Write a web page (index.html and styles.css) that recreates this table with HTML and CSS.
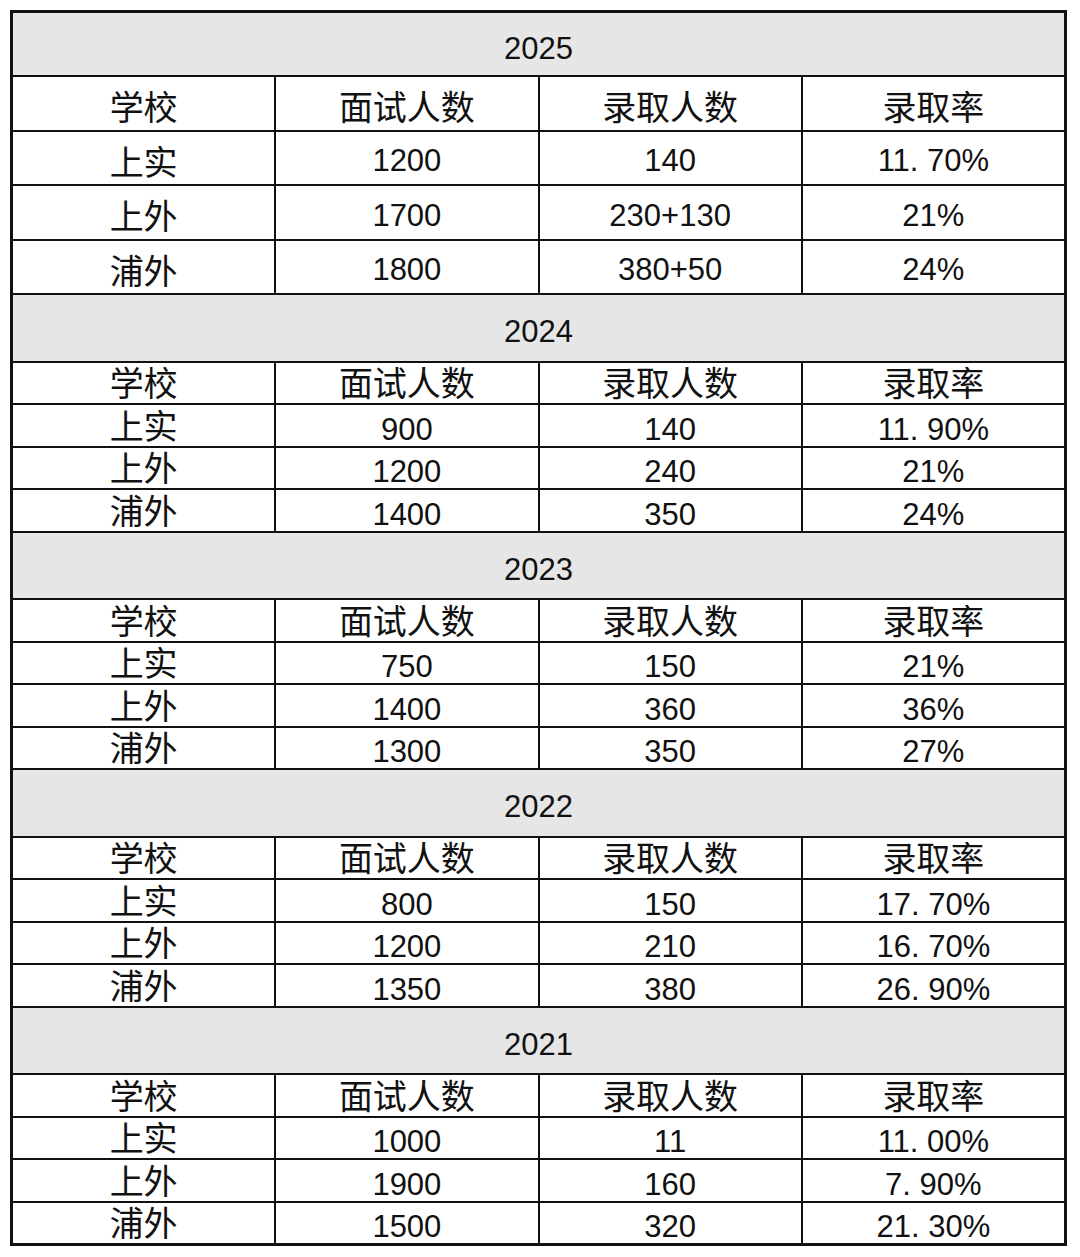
FILE: index.html
```html
<!DOCTYPE html>
<html lang="zh-CN">
<head>
<meta charset="utf-8">
<title>面试录取数据</title>
<link rel="stylesheet" href="styles.css">
</head>
<body>
<div class="sheet">
  <div class="year y-first">2025</div>
  <div class="c big cjk">学校</div><div class="c big cjk">面试人数</div><div class="c big cjk">录取人数</div><div class="c big cjk">录取率</div>
  <div class="c big cjk">上实</div><div class="c big">1200</div><div class="c big">140</div><div class="c big">11. 70%</div>
  <div class="c big cjk">上外</div><div class="c big">1700</div><div class="c big">230+130</div><div class="c big">21%</div>
  <div class="c big cjk">浦外</div><div class="c big">1800</div><div class="c big">380+50</div><div class="c big">24%</div>

  <div class="year">2024</div>
  <div class="c sm cjk">学校</div><div class="c sm cjk">面试人数</div><div class="c sm cjk">录取人数</div><div class="c sm cjk">录取率</div>
  <div class="c sm cjk">上实</div><div class="c sm">900</div><div class="c sm">140</div><div class="c sm">11. 90%</div>
  <div class="c sm cjk">上外</div><div class="c sm">1200</div><div class="c sm">240</div><div class="c sm">21%</div>
  <div class="c sm cjk">浦外</div><div class="c sm">1400</div><div class="c sm">350</div><div class="c sm">24%</div>

  <div class="year">2023</div>
  <div class="c sm cjk">学校</div><div class="c sm cjk">面试人数</div><div class="c sm cjk">录取人数</div><div class="c sm cjk">录取率</div>
  <div class="c sm cjk">上实</div><div class="c sm">750</div><div class="c sm">150</div><div class="c sm">21%</div>
  <div class="c sm cjk">上外</div><div class="c sm">1400</div><div class="c sm">360</div><div class="c sm">36%</div>
  <div class="c sm cjk">浦外</div><div class="c sm">1300</div><div class="c sm">350</div><div class="c sm">27%</div>

  <div class="year">2022</div>
  <div class="c sm cjk">学校</div><div class="c sm cjk">面试人数</div><div class="c sm cjk">录取人数</div><div class="c sm cjk">录取率</div>
  <div class="c sm cjk">上实</div><div class="c sm">800</div><div class="c sm">150</div><div class="c sm">17. 70%</div>
  <div class="c sm cjk">上外</div><div class="c sm">1200</div><div class="c sm">210</div><div class="c sm">16. 70%</div>
  <div class="c sm cjk">浦外</div><div class="c sm">1350</div><div class="c sm">380</div><div class="c sm">26. 90%</div>

  <div class="year">2021</div>
  <div class="c sm cjk">学校</div><div class="c sm cjk">面试人数</div><div class="c sm cjk">录取人数</div><div class="c sm cjk">录取率</div>
  <div class="c sm cjk">上实</div><div class="c sm">1000</div><div class="c sm">11</div><div class="c sm">11. 00%</div>
  <div class="c sm cjk">上外</div><div class="c sm">1900</div><div class="c sm">160</div><div class="c sm">7. 90%</div>
  <div class="c sm cjk">浦外</div><div class="c sm">1500</div><div class="c sm">320</div><div class="c sm">21. 30%</div>
</div>
</body>
</html>
```
FILE: styles.css
```css
html, body {
  margin: 0;
  padding: 0;
  background: #ffffff;
}

.sheet {
  box-sizing: border-box;
  width: 1057px;
  margin: 10px 0 0 10px;
  border: 3px solid #111;
  background: #111;
  display: grid;
  grid-template-columns: repeat(4, 1fr);
  gap: 2px;
  font-family: "Liberation Sans", "Noto Sans CJK SC", sans-serif;
  font-size: 31px;
  color: #111;
}

.year {
  grid-column: 1 / -1;
  height: 65.5px;
  background: #e6e6e6;
  display: flex;
  align-items: center;
  justify-content: center;
  padding-top: 8px;
  box-sizing: border-box;
  line-height: 1;
}

.y-first {
  height: 62px;
}

.c {
  background: #fff;
  display: flex;
  align-items: center;
  justify-content: center;
  box-sizing: border-box;
  line-height: 1;
  white-space: pre;
}

.big {
  height: 52.5px;
  padding-top: 6px;
}

.sm {
  height: 40.5px;
  padding-top: 8px;
}

.cjk {
  font-family: "Noto Sans CJK SC", sans-serif;
  font-size: 34px;
}

.sm.cjk {
  padding-top: 0;
  padding-bottom: 1px;
  line-height: 34px;
}
```
